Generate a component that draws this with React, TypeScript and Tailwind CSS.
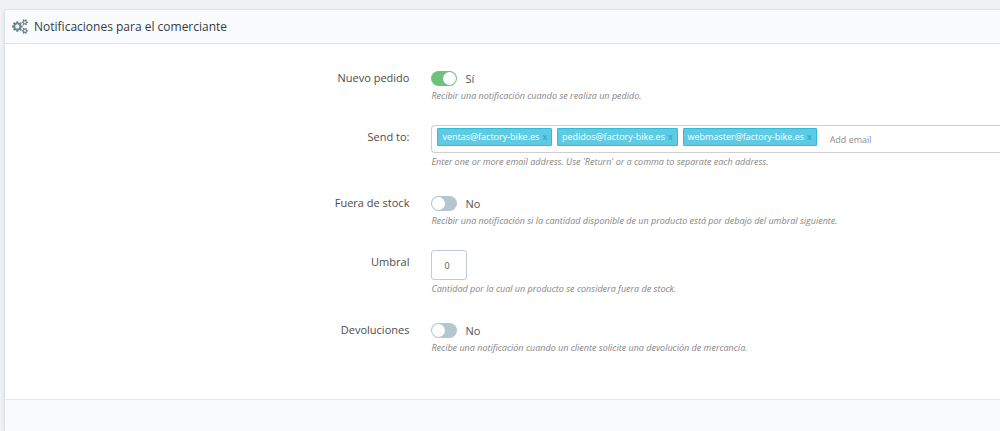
import { useState, type ReactNode } from "react";

function CogsIcon() {
  return (
    <svg viewBox="0 0 1920 1792" className="h-[15px] w-4 text-[#6c868e]" fill="currentColor" aria-hidden="true">
      <path d="M896 896q0-106-75-181t-181-75-181 75-75 181 75 181 181 75 181-75 75-181zm768 512q0-52-38-90t-90-38-90 38-38 90q0 53 37.5 90.5t90.5 37.5 90.5-37.5 37.5-90.5zm0-1024q0-52-38-90t-90-38-90 38-38 90q0 53 37.5 90.5t90.5 37.5 90.5-37.5 37.5-90.5zm-384 421v185q0 10-7 19.5t-16 10.5l-155 24q-11 35-32 76 34 48 90 115 7 11 7 20 0 12-7 19-23 30-82.5 89.5t-78.5 59.5q-11 0-21-7l-115-90q-37 19-77 31-11 108-23 155-7 24-30 24h-186q-11 0-20-7.5t-10-17.5l-23-153q-34-10-75-31l-118 89q-7 7-20 7-11 0-21-8-144-133-144-160 0-9 7-19 10-14 41-53t47-61q-23-44-35-82l-152-24q-10-1-17-9.5t-7-19.5v-185q0-10 7-19.5t16-10.5l155-24q11-35 32-76-34-48-90-115-7-11-7-20 0-12 7-20 22-30 82-89t79-59q11 0 21 7l115 90q34-18 77-32 11-108 23-154 7-24 30-24h186q11 0 20 7.5t10 17.5l23 153q34 10 75 31l118-89q8-7 20-7 11 0 21 8 144 133 144 160 0 8-7 19-12 16-42 54t-45 60q23 48 34 82l152 23q10 2 17 10.5t7 19.5zm640 533v140q0 16-149 31-12 27-30 52 51 113 51 138 0 4-4 7-122 71-124 71-8 0-46-47t-52-68q-20 2-30 2t-30-2q-14 21-52 68t-46 47q-2 0-124-71-4-3-4-7 0-25 51-138-18-25-30-52-149-15-149-31v-140q0-16 149-31 13-29 30-52-51-113-51-138 0-4 4-7 4-2 35-20t59-34 30-16q8 0 46 46.5t52 67.5q20-2 30-2t30 2q51-71 92-112l6-2q4 0 124 70 4 3 4 7 0 25-51 138 17 23 30 52 149 15 149 31zm0-1024v140q0 16-149 31-12 27-30 52 51 113 51 138 0 4-4 7-122 71-124 71-8 0-46-47t-52-68q-20 2-30 2t-30-2q-14 21-52 68t-46 47q-2 0-124-71-4-3-4-7 0-25 51-138-18-25-30-52-149-15-149-31v-140q0-16 149-31 13-29 30-52-51-113-51-138 0-4 4-7 4-2 35-20t59-34 30-16q8 0 46 46.5t52 67.5q20-2 30-2t30 2q51-71 92-112l6-2q4 0 124 70 4 3 4 7 0 25-51 138 17 23 30 52 149 15 149 31z" />
    </svg>
  );
}

type RowProps = {
  label: string;
  htmlFor: string;
  help: string;
  children: ReactNode;
};

function Row({ label, htmlFor, help, children }: RowProps) {
  return (
    <div className="grid grid-cols-[3fr_4fr]">
      <label htmlFor={htmlFor} className="pt-1 pr-[22px] text-right text-[11px] leading-4 text-[#4b4b4b]">
        {label}
      </label>
      <div className="min-w-0">
        {children}
        <p className="mt-px whitespace-nowrap text-[9px] leading-4 text-[#858585] italic">{help}</p>
      </div>
    </div>
  );
}

function Toggle({ id, initial }: { id: string; initial: boolean }) {
  const [on, setOn] = useState(initial);
  return (
    <div className="flex h-[21px] items-center gap-2 pt-1">
      <input
        id={id}
        type="checkbox"
        role="switch"
        checked={on}
        onChange={(e) => setOn(e.target.checked)}
        className="flex h-[15px] w-[26px] cursor-pointer appearance-none items-center rounded-full bg-[#b3c7cd] px-px before:size-[13px] before:rounded-full before:bg-white checked:justify-end checked:bg-[#70c17c]"
      />
      <span className="text-[11px] leading-4 text-[#4f5659]">{on ? "Sí" : "No"}</span>
    </div>
  );
}

function EmailTags() {
  const [emails, setEmails] = useState([
    "ventas@factory-bike.es",
    "pedidos@factory-bike.es",
    "webmaster@factory-bike.es",
  ]);
  const [draft, setDraft] = useState("");

  const commit = () => {
    const value = draft.trim();
    if (value) setEmails([...emails, value]);
    setDraft("");
  };

  return (
    <div className="flex h-7 items-start gap-[5px] rounded-l-sm border border-r-0 border-[#cfcfcf] bg-white px-[5px] pt-[2px]">
      {emails.map((email) => (
        <span
          key={email}
          className="flex h-[18px] items-center gap-[3px] rounded-[1px] border border-[#2fbcd8] bg-[#5dcbe3] px-1 text-[9px] leading-4 font-medium text-white"
        >
          {email}
          <button
            type="button"
            aria-label={`Eliminar ${email}`}
            onClick={() => setEmails(emails.filter((item) => item !== email))}
            className="cursor-pointer text-[8px] font-bold text-[#2fb2cf]"
          >
            x
          </button>
        </span>
      ))}
      <input
        id="emails"
        type="text"
        value={draft}
        placeholder="Add email"
        onChange={(e) => setDraft(e.target.value)}
        onKeyDown={(e) => {
          if (e.key === "Enter" || e.key === ",") {
            e.preventDefault();
            commit();
          }
        }}
        className="ml-2 h-[22px] min-w-0 flex-1 text-[9px] text-[#555] outline-none placeholder:text-[#8f8f8f]"
      />
    </div>
  );
}

export default function App() {
  return (
    <main className="min-h-screen bg-[#eff1f2] pt-[9px] pl-1 font-['Open_Sans','Noto_Sans',sans-serif]">
      <section className="overflow-hidden rounded-tl-[3px] border-t border-l border-[#dde5e8] bg-white shadow-sm">
        <header className="flex h-[34px] items-center gap-[6px] border-b border-[#d8e3e7] bg-[#fafbfd] px-[7px] text-[#363a41]">
          <CogsIcon />
          <h1 className="text-[12px] leading-4 font-medium">Notificaciones para el comerciante</h1>
        </header>
        <form className="flex flex-col gap-[21px] pt-[22px] pb-[43px]" onSubmit={(e) => e.preventDefault()}>
          <Row label="Nuevo pedido" htmlFor="new-order" help="Recibir una notificación cuando se realiza un pedido.">
            <Toggle id="new-order" initial={true} />
          </Row>
          <Row
            label="Send to:"
            htmlFor="emails"
            help="Enter one or more email address. Use 'Return' or a comma to separate each address."
          >
            <EmailTags />
          </Row>
          <Row
            label="Fuera de stock"
            htmlFor="out-of-stock"
            help="Recibir una notificación si la cantidad disponible de un producto está por debajo del umbral siguiente."
          >
            <Toggle id="out-of-stock" initial={false} />
          </Row>
          <Row label="Umbral" htmlFor="threshold" help="Cantidad por la cual un producto se considera fuera de stock.">
            <input
              id="threshold"
              type="text"
              defaultValue="0"
              className="block h-[30px] w-9 rounded-[3px] border border-[#bbcdd2] px-3 text-[9px] text-[#555]"
            />
          </Row>
          <Row
            label="Devoluciones"
            htmlFor="returns"
            help="Recibe una notificación cuando un cliente solicite una devolución de mercancía."
          >
            <Toggle id="returns" initial={false} />
          </Row>
        </form>
        <footer className="h-8 border-t border-[#e8eaeb] bg-[#fafbfd]" />
      </section>
    </main>
  );
}
